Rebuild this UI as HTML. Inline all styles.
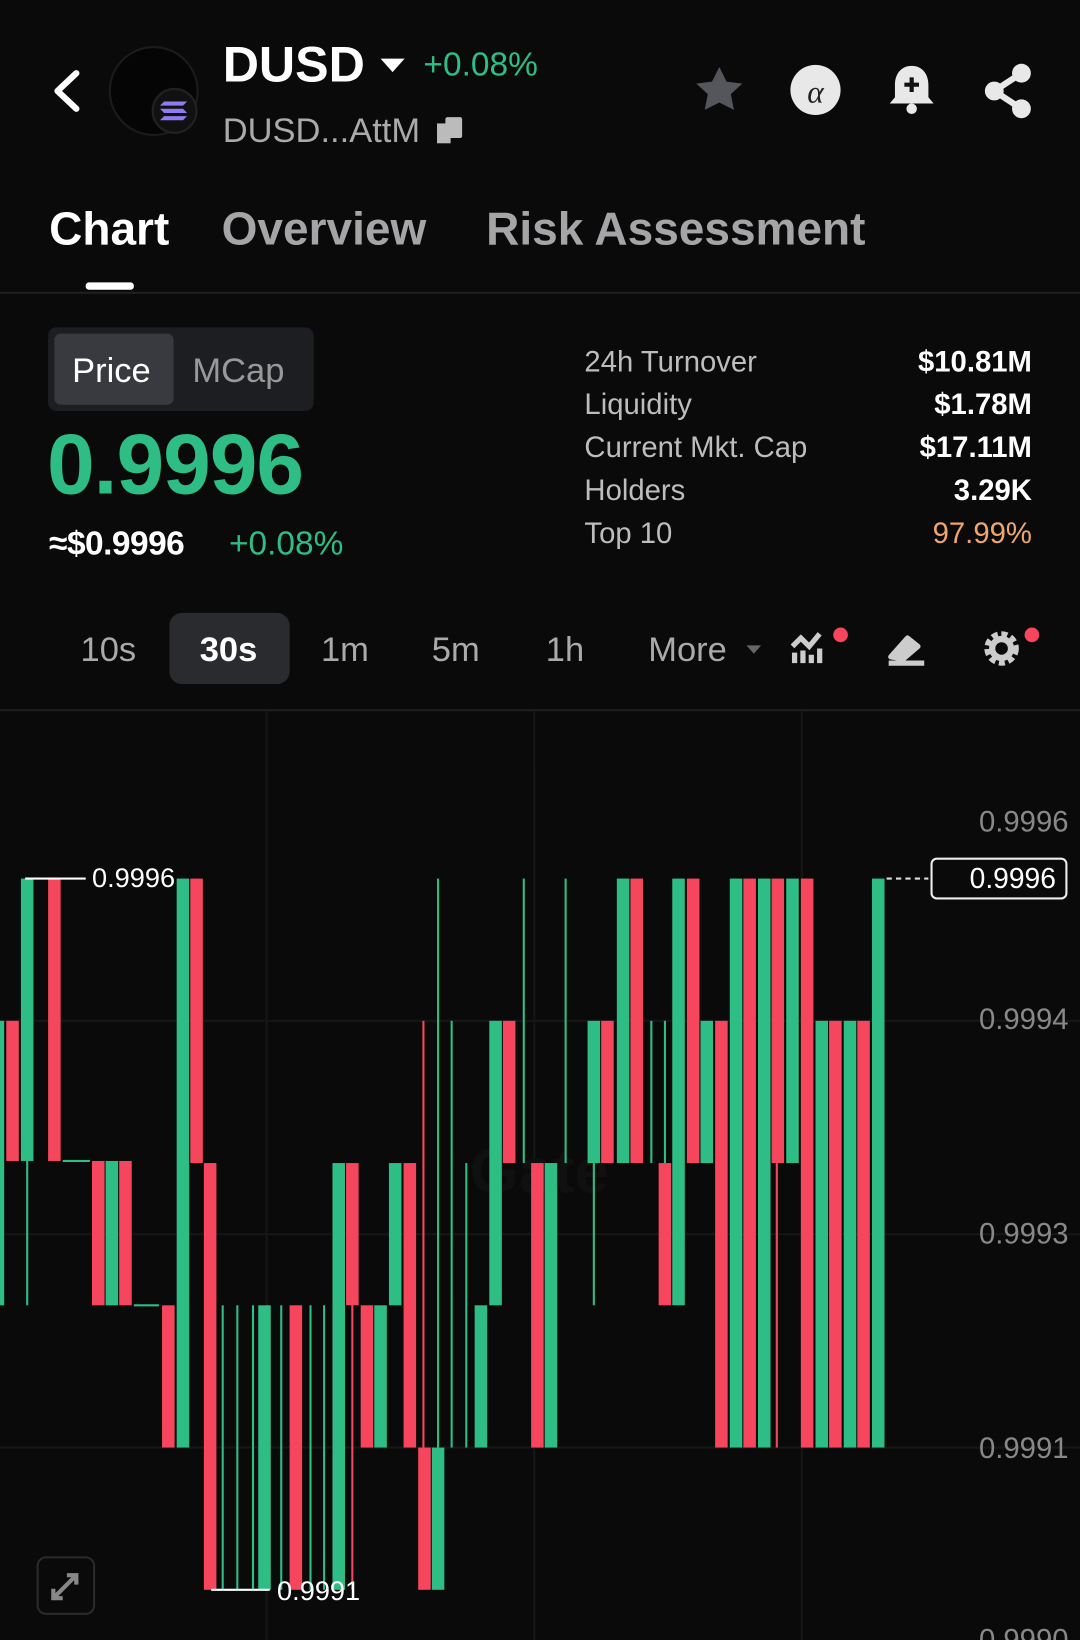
<!DOCTYPE html>
<html><head><meta charset="utf-8"><style>
html,body{margin:0;padding:0;background:#0a0a0a;width:1080px;height:1640px;overflow:hidden}
#w{position:absolute;left:0;top:0;width:1033px;height:1568px;transform:scale(1.04550,1.04592);transform-origin:0 0;font-family:"Liberation Sans",sans-serif;color:#fff}
.a{position:absolute;white-space:nowrap}
.g{color:#2ebd85}.r{color:#f6465d}
</style></head><body><div id="w">
<svg class="a" style="left:0;top:0" width="1033" height="300">
<path d="M73 70 L55 87 L73 104" stroke="#fff" stroke-width="6" fill="none" stroke-linecap="round" stroke-linejoin="round"/>
<circle cx="147" cy="87" r="42" fill="#050505" stroke="#1c1c1c" stroke-width="2"/>
<circle cx="167" cy="106" r="21" fill="#111" stroke="#222" stroke-width="2"/>
<path d="M157 97h22l-4 4h-22zM153 104h22l4 4h-22zM157 111h22l-4 4h-22z" fill="#8e7cf0"/>
<path d="M688 64l7 14 15 2-11 10 3 15-14-7-14 7 3-15-11-10 15-2z" fill="#55565c"/>
<circle cx="780" cy="86" r="24" fill="#e8e8e8"/>
<text x="780" y="98" font-size="30" font-style="italic" font-family="Liberation Serif" text-anchor="middle" fill="#222">α</text>
<path d="M872 63c-11 0-16 9-16 18v12l-5 6h42l-5-6V81c0-9-5-18-16-18z" fill="#e8e8e8"/>
<circle cx="872" cy="104" r="5" fill="#e8e8e8"/>
<path d="M872 74v14M865 81h14" stroke="#111" stroke-width="4"/>
<g fill="#e8e8e8"><circle cx="977" cy="70" r="9"/><circle cx="951" cy="87" r="9"/><circle cx="977" cy="104" r="9"/></g>
<path d="M977 70L951 87L977 104" stroke="#e8e8e8" stroke-width="6" fill="none"/>
<path d="M364 56h23l-11.5 13z" fill="#fff"/>
<rect x="418" y="118" width="13" height="19" fill="#bbb"/><rect x="426" y="112" width="16" height="20" rx="2" fill="#bbb"/>
</svg>
<div class="a" style="left:213px;top:35px;font-size:48px;font-weight:bold">DUSD</div>
<div class="a g" style="left:405px;top:43px;font-size:32px">+0.08%</div>
<div class="a" style="left:213px;top:106px;font-size:33px;color:#aaa">DUSD...AttM</div>
<div class="a" style="left:47px;top:195px;font-size:44px;font-weight:bold">Chart</div>
<div class="a" style="left:212px;top:195px;font-size:44px;font-weight:bold;color:#a5a5a8">Overview</div>
<div class="a" style="left:465px;top:195px;font-size:44px;font-weight:bold;color:#a5a5a8">Risk Assessment</div>
<div class="a" style="left:82px;top:270px;width:46px;height:7px;border-radius:3px;background:#fff"></div>
<div class="a" style="left:0;top:279px;width:1033px;height:2px;background:#1f1f1f"></div>

<div class="a" style="left:46px;top:313px;width:254px;height:80px;border-radius:8px;background:#1d1e21"></div>
<div class="a" style="left:52px;top:319px;width:114px;height:68px;border-radius:6px;background:#393a40"></div>
<div class="a" style="left:69px;top:335px;font-size:33px">Price</div>
<div class="a" style="left:184px;top:335px;font-size:33px;color:#999">MCap</div>
<div class="a g" style="left:45px;top:398px;font-size:82px;font-weight:bold;letter-spacing:-1px">0.9996</div>
<div class="a" style="left:47px;top:501px;font-size:32px;font-weight:bold;letter-spacing:-0.5px">≈$0.9996</div>
<div class="a g" style="left:219px;top:501px;font-size:32px">+0.08%</div>
<div class="a" style="left:559px;top:325px;font-size:28px;color:#bdbdbd;line-height:41px">24h Turnover<br>Liquidity<br>Current Mkt. Cap<br>Holders<br>Top 10</div>
<div class="a" style="right:46px;top:325px;font-size:28px;line-height:41px;text-align:right;font-weight:bold">$10.81M<br>$1.78M<br>$17.11M<br>3.29K<br><span style="color:#f0a56c;font-weight:normal">97.99%</span></div>

<div class="a" style="left:162px;top:586px;width:115px;height:68px;border-radius:12px;background:#2a2b2f"></div>
<div class="a" style="left:77px;top:602px;font-size:33px;color:#aaa">10s</div>
<div class="a" style="left:191px;top:602px;font-size:33px;font-weight:bold">30s</div>
<div class="a" style="left:307px;top:602px;font-size:33px;color:#aaa">1m</div>
<div class="a" style="left:413px;top:602px;font-size:33px;color:#aaa">5m</div>
<div class="a" style="left:522px;top:602px;font-size:33px;color:#aaa">1h</div>
<div class="a" style="left:620px;top:602px;font-size:33px;color:#aaa">More</div>
<svg class="a" style="left:700px;top:590px" width="333" height="60">
<path d="M14 27h14l-7 8z" fill="#666"/>
<path d="M60 44v-10M68 44v-12M76 44v-8M84 44v-14M58 28l8-8 8 8 10-12" stroke="#ccc" stroke-width="5" fill="none"/>
<circle cx="104" cy="17" r="7" fill="#f6465d"/>
<path d="M150 44h34M152 38l16-18 10 8-14 12z" stroke="#ccc" stroke-width="5" fill="#ccc" stroke-linejoin="round"/>
<circle cx="258" cy="30" r="12" fill="none" stroke="#ccc" stroke-width="9" stroke-dasharray="5 3"/>
<circle cx="258" cy="30" r="9" fill="none" stroke="#ccc" stroke-width="6"/>
<circle cx="287" cy="17" r="7" fill="#f6465d"/>
</svg>
<div class="a" style="left:0;top:678px;width:1033px;height:2px;background:#1f1f1f"></div>

<svg class="a" style="left:0;top:680px" width="1033" height="888">
<g transform="translate(0,-680)">
<g stroke="#161616" stroke-width="2"><path d="M255 680v888M511 680v888M767 680v888M0 976h1033M0 1180h1033M0 1384h1033"/></g>
<text x="516" y="1140" font-size="60" font-weight="bold" fill="#101010" font-family="Liberation Sans" text-anchor="middle">Gate</text>
<g fill="#2ebd85">
<rect x="0" y="976" width="4" height="272"/><rect x="20" y="840" width="12" height="270"/><rect x="25" y="1110" width="2" height="138"/>
<rect x="101" y="1110" width="12" height="138"/><rect x="169" y="840" width="12" height="544"/>
<rect x="212" y="1248" width="2" height="272"/><rect x="226" y="1248" width="2" height="272"/><rect x="241" y="1248" width="2" height="272"/><rect x="247" y="1248" width="12" height="272"/><rect x="255" y="1248" width="2" height="272"/><rect x="268" y="1248" width="2" height="272"/>
<rect x="296" y="1248" width="2" height="272"/><rect x="309" y="1248" width="2" height="272"/><rect x="318" y="1112" width="12" height="408"/>
<rect x="358" y="1248" width="12" height="136"/><rect x="372" y="1112" width="12" height="136"/><rect x="413" y="1384" width="12" height="136"/>
<rect x="418" y="840" width="2" height="544"/><rect x="431" y="976" width="2" height="408"/><rect x="445" y="1112" width="2" height="272"/>
<rect x="454" y="1248" width="12" height="136"/><rect x="468" y="976" width="12" height="272"/><rect x="500" y="840" width="2" height="272"/>
<rect x="521" y="1112" width="12" height="272"/><rect x="540" y="840" width="2" height="272"/><rect x="562" y="976" width="12" height="136"/><rect x="567" y="1112" width="2" height="136"/>
<rect x="590" y="840" width="12" height="272"/><rect x="622" y="976" width="2" height="136"/><rect x="635" y="976" width="2" height="136"/>
<rect x="643" y="840" width="12" height="408"/><rect x="670" y="976" width="12" height="136"/><rect x="698" y="840" width="12" height="544"/>
<rect x="725" y="840" width="12" height="544"/><rect x="752" y="840" width="12" height="272"/><rect x="780" y="976" width="12" height="408"/>
<rect x="807" y="976" width="12" height="408"/><rect x="834" y="840" width="12" height="544"/>
<rect x="60" y="1109" width="26" height="2"/><rect x="128" y="1247" width="24" height="2"/>
</g>
<g fill="#f6465d">
<rect x="6" y="976" width="12" height="134"/><rect x="46" y="840" width="12" height="270"/><rect x="88" y="1110" width="12" height="138"/>
<rect x="114" y="1110" width="12" height="138"/><rect x="155" y="1248" width="12" height="136"/><rect x="182" y="840" width="12" height="272"/>
<rect x="195" y="1112" width="12" height="408"/><rect x="277" y="1248" width="12" height="272"/><rect x="331" y="1112" width="12" height="136"/><rect x="336" y="1248" width="2" height="272"/>
<rect x="345" y="1248" width="12" height="136"/><rect x="386" y="1112" width="12" height="272"/><rect x="400" y="1384" width="12" height="136"/><rect x="404" y="976" width="2" height="408"/>
<rect x="481" y="976" width="12" height="136"/><rect x="508" y="1112" width="12" height="272"/><rect x="575" y="976" width="12" height="136"/>
<rect x="603" y="840" width="12" height="272"/><rect x="630" y="1112" width="12" height="136"/><rect x="657" y="840" width="12" height="272"/>
<rect x="684" y="976" width="12" height="408"/><rect x="711" y="840" width="12" height="544"/><rect x="738" y="840" width="12" height="272"/><rect x="742" y="1112" width="2" height="272"/>
<rect x="766" y="840" width="12" height="544"/><rect x="793" y="976" width="12" height="408"/><rect x="820" y="976" width="12" height="408"/>
</g>
<path d="M24 840h58M202 1520h56" stroke="#fff" stroke-width="2"/>
<text x="88" y="848" font-size="26" fill="#fff" font-family="Liberation Sans">0.9996</text>
<text x="265" y="1530" font-size="26" fill="#fff" font-family="Liberation Sans">0.9991</text>
<path d="M848 840h40" stroke="#ddd" stroke-width="2" stroke-dasharray="5 4"/>
<rect x="891" y="821" width="129" height="38" rx="5" fill="#0a0a0a" stroke="#eee" stroke-width="2"/>
<text x="1010" y="849" font-size="27" fill="#fff" text-anchor="end" font-family="Liberation Sans">0.9996</text>
<g font-size="28" fill="#888" text-anchor="end" font-family="Liberation Sans">
<text x="1022" y="795">0.9996</text><text x="1022" y="984">0.9994</text><text x="1022" y="1189">0.9993</text><text x="1022" y="1394">0.9991</text><text x="1022" y="1577">0.9990</text></g>
<rect x="36" y="1489" width="54" height="54" rx="8" fill="none" stroke="#2a2a2a" stroke-width="2"/>
<path d="M52 1527l20-20M64 1506h9v9M51 1519v9h9" stroke="#888" stroke-width="4" fill="none"/>
</g></svg>
</div></body></html>
